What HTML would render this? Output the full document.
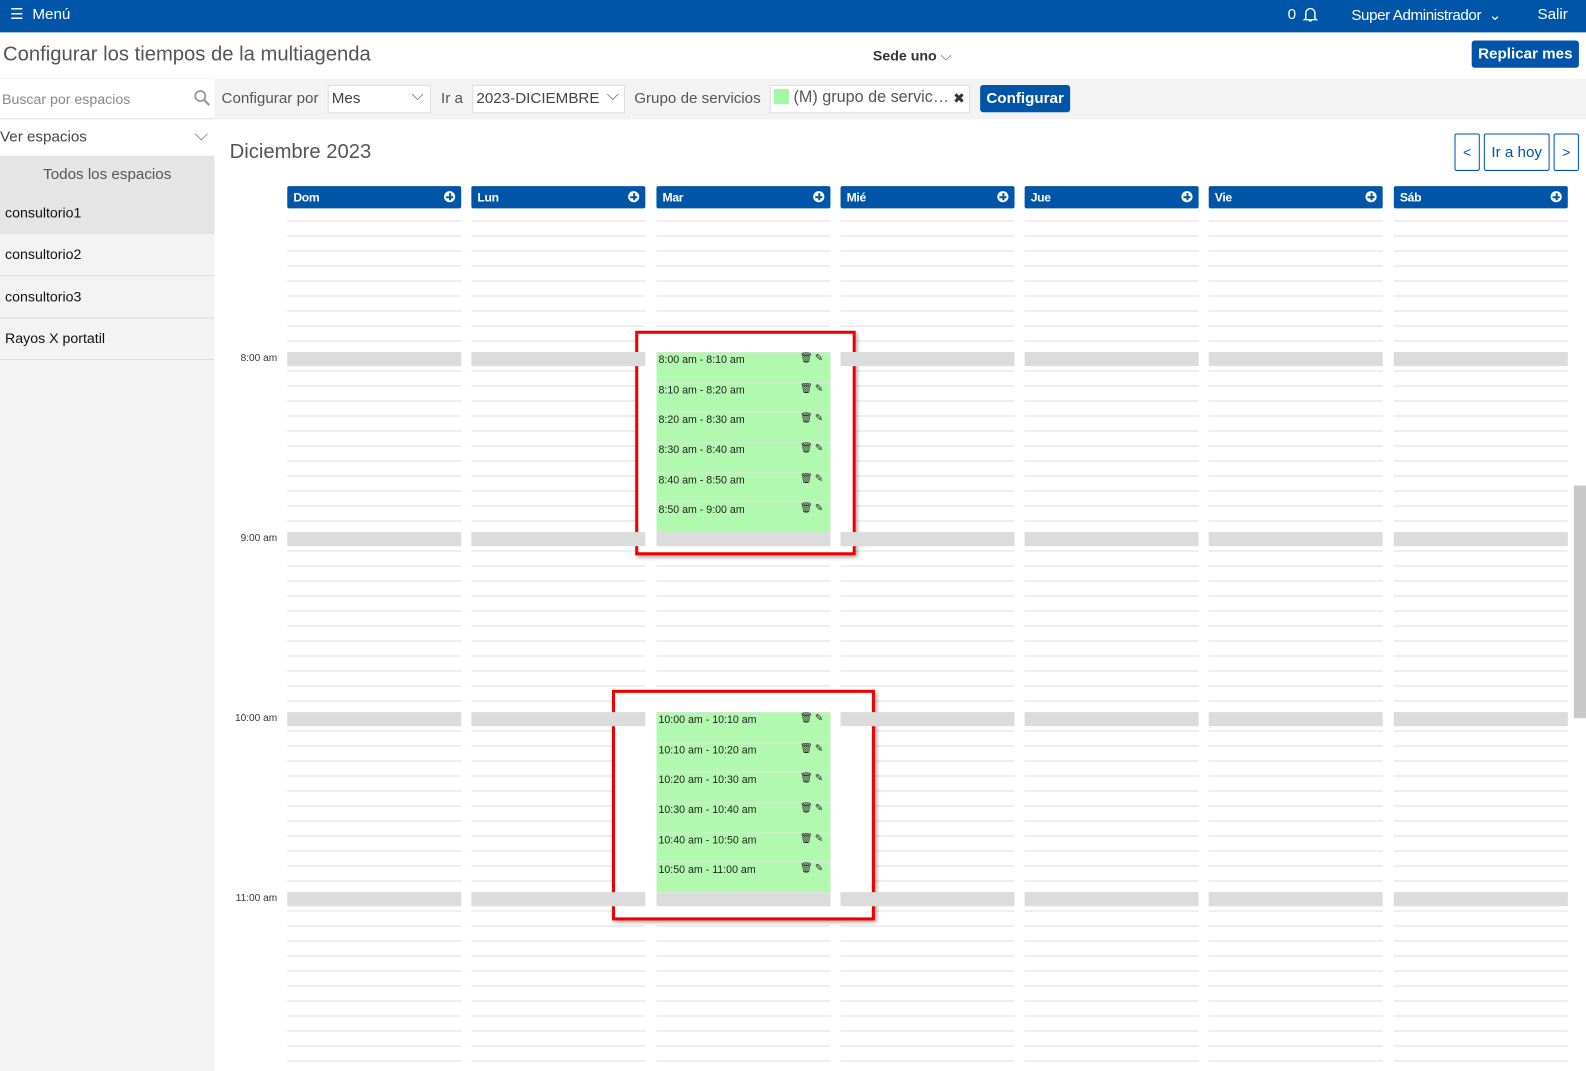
<!DOCTYPE html>
<html style="width:1586px;height:1071px;overflow:hidden"><head><meta charset="utf-8"><style>
*{box-sizing:border-box;margin:0;padding:0}
html,body{width:1586px;height:1071px;overflow:hidden}
body{background:#fff;font-family:"Liberation Sans",Arial,sans-serif;color:#333}
#w{position:absolute;left:0;top:0;width:1568px;height:1059px;transform:scale(1.01148);transform-origin:0 0;overflow:hidden}
.a{position:absolute}
.top{left:0;top:0;width:1568px;height:32px;background:#0055a8;color:#fff;font-size:15px}
.col{position:absolute;top:218px;height:835px;width:172px;background:repeating-linear-gradient(to bottom,#ddd 0 1px,transparent 1px 14.833px)}
.hd{position:absolute;top:184px;height:22px;width:172px;background:#0055a8;border-radius:2px;color:#fff;font-weight:bold;font-size:12px;padding:4px 6px;letter-spacing:-0.3px}
.hd i{position:absolute;right:6px;top:5px;width:11px;height:11px;border-radius:50%;background:#fff}
.hd i:before{content:"";position:absolute;left:2px;top:4.5px;width:7px;height:2px;background:#0055a8}
.hd i:after{content:"";position:absolute;left:4.5px;top:2px;width:2px;height:7px;background:#0055a8}
.band{position:absolute;height:14px;width:172px;background:#dcdcdc;z-index:2}
.lbl{position:absolute;left:200px;width:74px;font-size:10px;color:#333;text-align:right}
.box{position:absolute;border:3px solid #e00;background:#fff;z-index:1;box-shadow:2px 2px 4px rgba(0,0,0,.4)}
.g{position:absolute;left:649px;width:172px;height:29.67px;background:#b2f9b0;z-index:3;font-size:10.5px;color:#222;padding:1px 2px;border-top:1px solid #d0e8ce}
.g span{position:absolute;right:5px;top:0px;font-size:10px;letter-spacing:2px}
.side{left:0;top:77px;width:212px;height:994px;background:#f3f3f3}
.it{position:absolute;left:0;width:212px;height:41.5px;border-bottom:1px solid #ddd;font-size:14px;color:#111;padding:12px 5px}
</style></head><body><div id="w">
<div class="a top"><span class="a" style="left:10px;top:5px;font-size:15px">☰</span><span class="a" style="left:32px;top:6px">Menú</span>
<span class="a" style="left:1273px;top:6px">0</span>
<svg class="a" style="left:1288px;top:6px" width="15" height="16" viewBox="0 0 15 16"><path d="M3 12V7a4.5 4.5 0 0 1 9 0v5l1.5 1.5h-12z M6 14.5h3" fill="none" stroke="#fff" stroke-width="1.4"/></svg>
<span class="a" style="left:1336px;top:6px;letter-spacing:-0.4px;white-space:nowrap">Super Administrador &nbsp;⌄</span>
<span class="a" style="left:1520px;top:6px">Salir</span></div>
<div class="a" style="left:3px;top:43px;font-size:20px;color:#555;white-space:nowrap">Configurar los tiempos de la multiagenda</div>
<div class="a" style="left:863px;top:47px;font-size:14px;font-weight:bold;color:#333;white-space:nowrap">Sede uno <span style="font-weight:normal;color:#666">⌵</span></div>
<div class="a" style="left:1455px;top:40px;width:106px;height:27px;background:#0055a8;border-radius:3px;color:#fff;font-weight:bold;font-size:15px;text-align:center;line-height:27px">Replicar mes</div>
<div class="a side"></div>
<div class="a" style="left:212px;top:78px;width:1374px;height:40px;background:#f3f3f3"></div>
<div class="a" style="left:0;top:78px;width:212px;height:40px;background:#fff;border-bottom:1px solid #ddd"></div>
<div class="a" style="left:2px;top:90px;font-size:14px;color:#888">Buscar por espacios</div>
<svg class="a" style="left:191px;top:88px" width="18" height="18" viewBox="0 0 18 18"><circle cx="7" cy="7" r="5" fill="none" stroke="#999" stroke-width="1.8"/><path d="M11 11l5 5" stroke="#999" stroke-width="2.2"/></svg>
<div class="a" style="left:219px;top:89px;font-size:15px;color:#555">Configurar por</div>
<div class="a" style="left:324px;top:84px;width:102px;height:28px;background:#fff;border:1px solid #ddd;font-size:15px;color:#444;padding:4px 3px">Mes<span class="a" style="right:6px;top:1px;color:#666;font-size:16px">⌵</span></div>
<div class="a" style="left:436px;top:89px;font-size:15px;color:#555">Ir a</div>
<div class="a" style="left:467px;top:84px;width:151px;height:28px;background:#fff;border:1px solid #ddd;font-size:15px;color:#444;padding:4px 3px;white-space:nowrap;overflow:hidden">2023-DICIEMBRE<span class="a" style="right:5px;top:1px;color:#666;font-size:16px">⌵</span></div>
<div class="a" style="left:627px;top:89px;font-size:15px;color:#555;white-space:nowrap">Grupo de servicios</div>
<div class="a" style="left:761px;top:84px;width:198px;height:28px;background:#fff;border:1px solid #ddd;font-size:16px;color:#555;padding:3px 3px;white-space:nowrap;overflow:hidden"><span style="display:inline-block;width:15px;height:15px;background:#a4f7a5;vertical-align:-2px"></span> (M) grupo de servic…<span class="a" style="right:4px;top:4px;font-size:14px;color:#333">✖</span></div>
<div class="a" style="left:969px;top:84px;width:89px;height:27px;background:#0055a8;border-radius:3px;color:#fff;font-weight:bold;font-size:15px;text-align:center;line-height:27px">Configurar</div>
<div class="a" style="left:0;top:118px;width:212px;height:37px;background:#fff;border-bottom:1px solid #ddd;font-size:15px;color:#444;padding:9px 0">Ver espacios<span class="a" style="right:6px;top:5px;color:#777;font-size:18px">⌵</span></div>
<div class="a" style="left:0;top:155px;width:212px;height:76px;background:#e5e5e5;border-bottom:1px solid #ddd"></div>
<div class="a" style="left:0;top:164px;width:212px;text-align:center;font-size:15px;color:#555">Todos los espacios</div>
<div class="it" style="top:190px;border:none">consultorio1</div>
<div class="it" style="top:231px">consultorio2</div>
<div class="it" style="top:273px">consultorio3</div>
<div class="it" style="top:314px">Rayos X portatil</div>
<div class="a" style="left:227px;top:139px;font-size:20px;color:#555">Diciembre 2023</div>
<div class="a" style="left:1438px;top:132px;width:25px;height:37px;border:1px solid #0055a8;border-radius:2px;color:#0055a8;text-align:center;line-height:35px;font-size:14px">&lt;</div>
<div class="a" style="left:1467px;top:132px;width:65px;height:37px;border:1px solid #0055a8;border-radius:2px;color:#0055a8;text-align:center;line-height:35px;font-size:15px">Ir a hoy</div>
<div class="a" style="left:1536px;top:132px;width:25px;height:37px;border:1px solid #0055a8;border-radius:2px;color:#0055a8;text-align:center;line-height:35px;font-size:14px">&gt;</div>
<div class="a" style="left:1556px;top:480px;width:12px;height:230px;background:#c8c8c8"></div>

<div class="hd" style="left:284px">Dom<i></i></div><div class="hd" style="left:466px">Lun<i></i></div><div class="hd" style="left:649px">Mar<i></i></div><div class="hd" style="left:831px">Mié<i></i></div><div class="hd" style="left:1013px">Jue<i></i></div><div class="hd" style="left:1195px">Vie<i></i></div><div class="hd" style="left:1378px">Sáb<i></i></div>
<div class="col" style="left:284px"></div><div class="col" style="left:466px"></div><div class="col" style="left:649px"></div><div class="col" style="left:831px"></div><div class="col" style="left:1013px"></div><div class="col" style="left:1195px"></div><div class="col" style="left:1378px"></div>

<div class="box" style="left:628px;top:327px;width:218px;height:222px"></div>
<div class="box" style="left:605px;top:682px;width:260px;height:228px"></div>

<div class="lbl" style="top:349px">8:00 am</div><div class="lbl" style="top:527px">9:00 am</div><div class="lbl" style="top:705px">10:00 am</div><div class="lbl" style="top:883px">11:00 am</div>

<div class="band" style="left:284px;top:348px"></div><div class="band" style="left:466px;top:348px"></div><div class="band" style="left:831px;top:348px"></div><div class="band" style="left:1013px;top:348px"></div><div class="band" style="left:1195px;top:348px"></div><div class="band" style="left:1378px;top:348px"></div>
<div class="band" style="left:284px;top:526px"></div><div class="band" style="left:466px;top:526px"></div><div class="band" style="left:649px;top:526px"></div><div class="band" style="left:831px;top:526px"></div><div class="band" style="left:1013px;top:526px"></div><div class="band" style="left:1195px;top:526px"></div><div class="band" style="left:1378px;top:526px"></div>
<div class="band" style="left:284px;top:704px"></div><div class="band" style="left:466px;top:704px"></div><div class="band" style="left:831px;top:704px"></div><div class="band" style="left:1013px;top:704px"></div><div class="band" style="left:1195px;top:704px"></div><div class="band" style="left:1378px;top:704px"></div>
<div class="band" style="left:284px;top:882px"></div><div class="band" style="left:466px;top:882px"></div><div class="band" style="left:649px;top:882px"></div><div class="band" style="left:831px;top:882px"></div><div class="band" style="left:1013px;top:882px"></div><div class="band" style="left:1195px;top:882px"></div><div class="band" style="left:1378px;top:882px"></div>

<div class="g" style="top:348px">8:00 am - 8:10 am<span>🗑✎</span></div>
<div class="g" style="top:377.7px">8:10 am - 8:20 am<span>🗑✎</span></div>
<div class="g" style="top:407.3px">8:20 am - 8:30 am<span>🗑✎</span></div>
<div class="g" style="top:437px">8:30 am - 8:40 am<span>🗑✎</span></div>
<div class="g" style="top:466.7px">8:40 am - 8:50 am<span>🗑✎</span></div>
<div class="g" style="top:496.3px">8:50 am - 9:00 am<span>🗑✎</span></div>
<div class="g" style="top:704px">10:00 am - 10:10 am<span>🗑✎</span></div>
<div class="g" style="top:733.7px">10:10 am - 10:20 am<span>🗑✎</span></div>
<div class="g" style="top:763.3px">10:20 am - 10:30 am<span>🗑✎</span></div>
<div class="g" style="top:793px">10:30 am - 10:40 am<span>🗑✎</span></div>
<div class="g" style="top:822.7px">10:40 am - 10:50 am<span>🗑✎</span></div>
<div class="g" style="top:852.3px">10:50 am - 11:00 am<span>🗑✎</span></div>
</div></body></html>
